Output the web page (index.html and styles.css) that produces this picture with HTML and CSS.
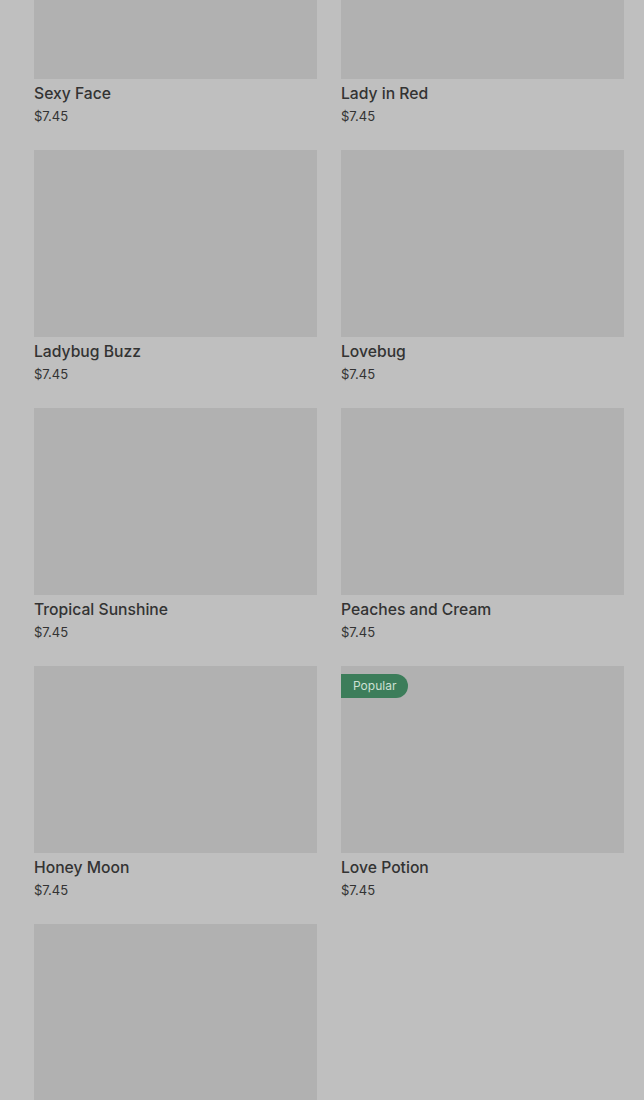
FILE: index.html
```html
<!DOCTYPE html>
<html>
<head>
  <meta charset="UTF-8">
  <title>Products</title>
  <link rel="stylesheet" href="styles.css">
</head>
<body>
  <div class="grid">
    <div class="card">
      <div class="thumb"></div>
      <p class="name">Sexy Face</p>
      <p class="price">$7.45</p>
    </div>
    <div class="card">
      <div class="thumb"></div>
      <p class="name">Lady in Red</p>
      <p class="price">$7.45</p>
    </div>
    <div class="card">
      <div class="thumb"></div>
      <p class="name">Ladybug Buzz</p>
      <p class="price">$7.45</p>
    </div>
    <div class="card">
      <div class="thumb"></div>
      <p class="name">Lovebug</p>
      <p class="price">$7.45</p>
    </div>
    <div class="card">
      <div class="thumb"></div>
      <p class="name">Tropical Sunshine</p>
      <p class="price">$7.45</p>
    </div>
    <div class="card">
      <div class="thumb"></div>
      <p class="name">Peaches and Cream</p>
      <p class="price">$7.45</p>
    </div>
    <div class="card">
      <div class="thumb"></div>
      <p class="name">Honey Moon</p>
      <p class="price">$7.45</p>
    </div>
    <div class="card">
      <div class="thumb">
        <span class="badge">Popular</span>
      </div>
      <p class="name">Love Potion</p>
      <p class="price">$7.45</p>
    </div>
    <div class="card">
      <div class="thumb"></div>
    </div>
  </div>
</body>
</html>
```

FILE: styles.css
```css
body {
  margin: 0;
  background: #bfbfbf;
  font-family: Inter, "Liberation Sans", sans-serif;
  color: #333;
  overflow: hidden;
}
.grid {
  display: grid;
  grid-template-columns: 283px 283px;
  column-gap: 24px;
  row-gap: 25px;
  padding: 0 20px 0 34px;
  margin-top: -108px;
}
.card {
  display: flex;
  flex-direction: column;
}
.thumb {
  position: relative;
  height: 187px;
  background: #b1b1b1;
}
.badge {
  position: absolute;
  top: 8px;
  left: 0;
  height: 24px;
  line-height: 24px;
  padding: 0 12px;
  background: #3c7d5a;
  color: #cde0d3;
  font-size: 12px;
  border-radius: 0 12px 12px 0;
}
.name {
  margin: 5px 0 0;
  font-size: 15.7px;
  line-height: 20px;
  font-weight: 500;
}
.price {
  margin: 3px 0 0;
  font-size: 13px;
  line-height: 18px;
}
```
